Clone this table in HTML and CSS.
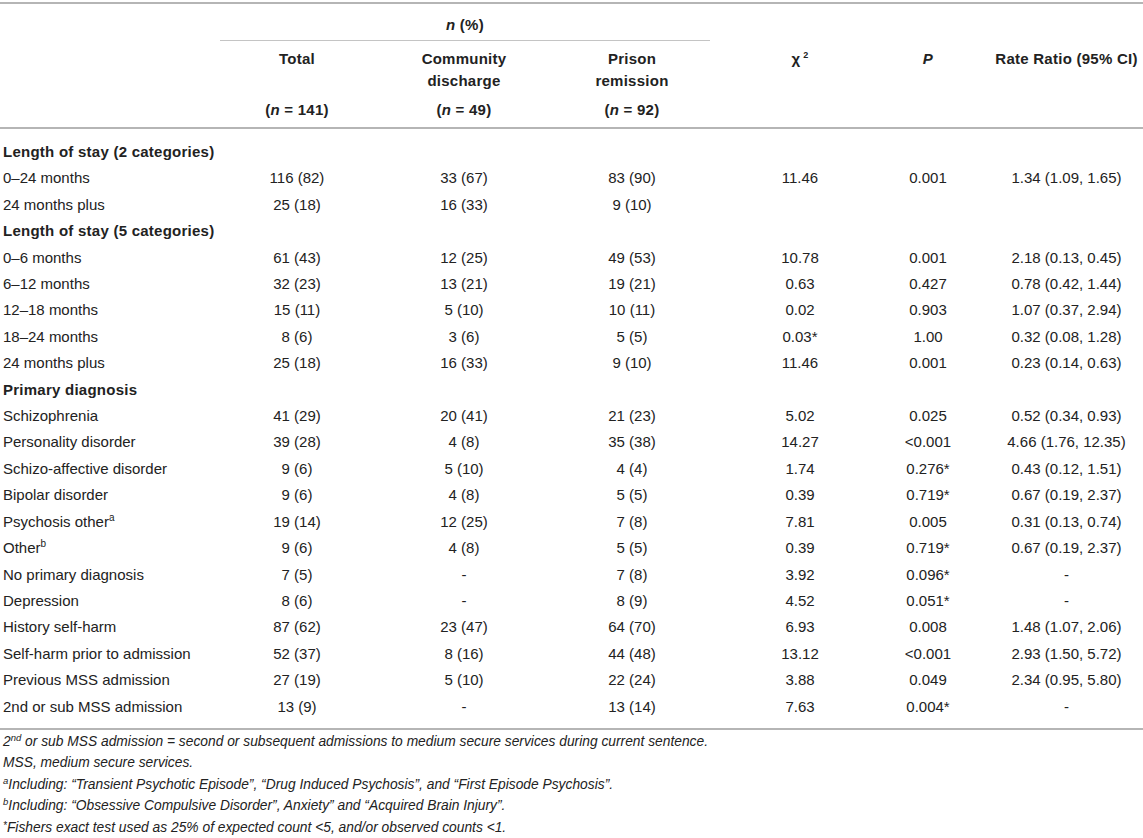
FILE: index.html
```html
<!DOCTYPE html>
<html lang="en">
<head>
<meta charset="utf-8">
<title>Table</title>
<link rel="stylesheet" href="styles.css">
</head>
<body>
<div class="page">
<table class="data">
  <colgroup>
    <col class="c1"><col class="c2"><col class="c3"><col class="c4"><col class="c5"><col class="c6"><col class="c7">
  </colgroup>
  <thead>
    <tr class="h1">
      <th class="blank"></th>
      <th class="span" colspan="3"><i>n</i> (%)</th>
      <th class="blank"></th><th class="blank"></th><th class="blank"></th>
    </tr>
    <tr class="h2">
      <th class="blank"></th>
      <th>Total</th>
      <th>Community<br>discharge</th>
      <th>Prison<br>remission</th>
      <th class="chi">χ<sup>2</sup></th>
      <th><i>P</i></th>
      <th class="rr">Rate Ratio (95% CI)</th>
    </tr>
    <tr class="h3">
      <th class="blank"></th>
      <th>(<i>n</i> = 141)</th>
      <th>(<i>n</i> = 49)</th>
      <th>(<i>n</i> = 92)</th>
      <th class="blank"></th><th class="blank"></th><th class="blank rr"></th>
    </tr>
  </thead>
  <tbody>
    <tr class="group first"><td class="lab">Length of stay (2 categories)</td><td></td><td></td><td></td><td></td><td></td><td class="rr"></td></tr>
    <tr><td class="lab">0–24 months</td><td>116 (82)</td><td>33 (67)</td><td>83 (90)</td><td>11.46</td><td>0.001</td><td class="rr">1.34 (1.09, 1.65)</td></tr>
    <tr><td class="lab">24 months plus</td><td>25 (18)</td><td>16 (33)</td><td>9 (10)</td><td></td><td></td><td class="rr"></td></tr>
    <tr class="group"><td class="lab">Length of stay (5 categories)</td><td></td><td></td><td></td><td></td><td></td><td class="rr"></td></tr>
    <tr><td class="lab">0–6 months</td><td>61 (43)</td><td>12 (25)</td><td>49 (53)</td><td>10.78</td><td>0.001</td><td class="rr">2.18 (0.13, 0.45)</td></tr>
    <tr><td class="lab">6–12 months</td><td>32 (23)</td><td>13 (21)</td><td>19 (21)</td><td>0.63</td><td>0.427</td><td class="rr">0.78 (0.42, 1.44)</td></tr>
    <tr><td class="lab">12–18 months</td><td>15 (11)</td><td>5 (10)</td><td>10 (11)</td><td>0.02</td><td>0.903</td><td class="rr">1.07 (0.37, 2.94)</td></tr>
    <tr><td class="lab">18–24 months</td><td>8 (6)</td><td>3 (6)</td><td>5 (5)</td><td>0.03*</td><td>1.00</td><td class="rr">0.32 (0.08, 1.28)</td></tr>
    <tr><td class="lab">24 months plus</td><td>25 (18)</td><td>16 (33)</td><td>9 (10)</td><td>11.46</td><td>0.001</td><td class="rr">0.23 (0.14, 0.63)</td></tr>
    <tr class="group"><td class="lab">Primary diagnosis</td><td></td><td></td><td></td><td></td><td></td><td class="rr"></td></tr>
    <tr><td class="lab">Schizophrenia</td><td>41 (29)</td><td>20 (41)</td><td>21 (23)</td><td>5.02</td><td>0.025</td><td class="rr">0.52 (0.34, 0.93)</td></tr>
    <tr><td class="lab">Personality disorder</td><td>39 (28)</td><td>4 (8)</td><td>35 (38)</td><td>14.27</td><td>&lt;0.001</td><td class="rr">4.66 (1.76, 12.35)</td></tr>
    <tr><td class="lab">Schizo-affective disorder</td><td>9 (6)</td><td>5 (10)</td><td>4 (4)</td><td>1.74</td><td>0.276*</td><td class="rr">0.43 (0.12, 1.51)</td></tr>
    <tr><td class="lab">Bipolar disorder</td><td>9 (6)</td><td>4 (8)</td><td>5 (5)</td><td>0.39</td><td>0.719*</td><td class="rr">0.67 (0.19, 2.37)</td></tr>
    <tr><td class="lab">Psychosis other<sup>a</sup></td><td>19 (14)</td><td>12 (25)</td><td>7 (8)</td><td>7.81</td><td>0.005</td><td class="rr">0.31 (0.13, 0.74)</td></tr>
    <tr><td class="lab">Other<sup>b</sup></td><td>9 (6)</td><td>4 (8)</td><td>5 (5)</td><td>0.39</td><td>0.719*</td><td class="rr">0.67 (0.19, 2.37)</td></tr>
    <tr><td class="lab">No primary diagnosis</td><td>7 (5)</td><td>-</td><td>7 (8)</td><td>3.92</td><td>0.096*</td><td class="rr">-</td></tr>
    <tr><td class="lab">Depression</td><td>8 (6)</td><td>-</td><td>8 (9)</td><td>4.52</td><td>0.051*</td><td class="rr">-</td></tr>
    <tr><td class="lab">History self-harm</td><td>87 (62)</td><td>23 (47)</td><td>64 (70)</td><td>6.93</td><td>0.008</td><td class="rr">1.48 (1.07, 2.06)</td></tr>
    <tr><td class="lab">Self-harm prior to admission</td><td>52 (37)</td><td>8 (16)</td><td>44 (48)</td><td>13.12</td><td>&lt;0.001</td><td class="rr">2.93 (1.50, 5.72)</td></tr>
    <tr><td class="lab">Previous MSS admission</td><td>27 (19)</td><td>5 (10)</td><td>22 (24)</td><td>3.88</td><td>0.049</td><td class="rr">2.34 (0.95, 5.80)</td></tr>
    <tr class="last"><td class="lab">2nd or sub MSS admission</td><td>13 (9)</td><td>-</td><td>13 (14)</td><td>7.63</td><td>0.004*</td><td class="rr">-</td></tr>
  </tbody>
</table>
<div class="notes">
  <p>2<sup>nd</sup> or sub MSS admission = second or subsequent admissions to medium secure services during current sentence.</p>
  <p>MSS, medium secure services.</p>
  <p><sup>a</sup>Including: “Transient Psychotic Episode”, “Drug Induced Psychosis”, and “First Episode Psychosis”.</p>
  <p><sup>b</sup>Including: “Obsessive Compulsive Disorder”, Anxiety” and “Acquired Brain Injury”.</p>
  <p><sup class="ast">*</sup>Fishers exact test used as 25% of expected count &lt;5, and/or observed counts &lt;1.</p>
</div>
</div>
</body>
</html>
```

FILE: styles.css
```css
html, body {
  margin: 0;
  padding: 0;
  background: #ffffff;
}

body {
  font-family: "Liberation Sans", Arial, Helvetica, sans-serif;
  color: #222222;
}

.page {
  width: 1143px;
  padding-top: 2px;
}

.data {
  width: 1143px;
  table-layout: fixed;
  border-collapse: collapse;
  font-size: 15px;
}

.c1 { width: 220px; }
.c2 { width: 154px; }
.c3 { width: 180px; }
.c4 { width: 156px; }
.c5 { width: 180px; }
.c6 { width: 76px; }
.c7 { width: 177px; }

.data thead {
  border-top: 2px solid #b5b5b5;
  border-bottom: 2px solid #b5b5b5;
}

.data th {
  font-weight: bold;
  text-align: center;
  vertical-align: top;
  padding: 0;
  line-height: 22px;
  white-space: nowrap;
  letter-spacing: 0.25px;
}

.h1 th {
  padding-top: 10px;
  padding-bottom: 4px;
}

.h1 .span {
  border-bottom: 1px solid #c4c4c4;
}

.h2 th {
  padding-top: 7px;
}

.h3 th {
  padding-top: 7px;
  padding-bottom: 6px;
}

.chi sup {
  font-size: 9px;
  margin-left: 3px;
  vertical-align: 6px;
  line-height: 0;
}

.data tbody {
  border-bottom: 2px solid #b5b5b5;
}

.data td {
  padding: 0;
  text-align: center;
  line-height: 26.4px;
  white-space: nowrap;
}

.data td.lab {
  text-align: left;
  padding-left: 3px;
}

.data .rr {
  padding-left: 24px;
}

.group td {
  font-weight: bold;
  letter-spacing: 0.25px;
}

.first td {
  padding-top: 10px;
}

.last td {
  padding-bottom: 8px;
}

.lab sup {
  font-size: 10px;
  vertical-align: 6px;
  line-height: 0;
}

.notes {
  padding-top: 1px;
  padding-left: 3px;
  font-size: 13.8px;
  font-style: italic;
  line-height: 21.5px;
}

.notes p {
  margin: 0;
  white-space: nowrap;
}

.notes sup {
  font-size: 9.5px;
  vertical-align: 5px;
  line-height: 0;
}

.notes .ast {
  font-size: 10px;
  vertical-align: 3px;
}
```
